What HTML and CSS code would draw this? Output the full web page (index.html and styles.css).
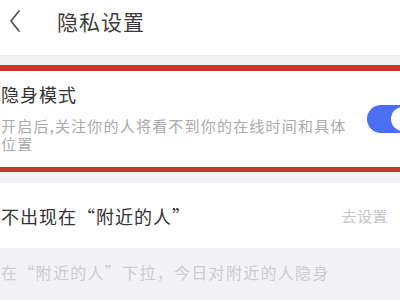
FILE: index.html
```html
<!DOCTYPE html>
<html lang="zh-CN">
<head>
<meta charset="utf-8">
<link rel="stylesheet" href="styles.css">
</head>
<body>
<div class="page">
  <header class="header">
    <svg class="back" width="14" height="24" viewBox="0 0 14 24"><path d="M11 2 L3 12 L11 22" fill="none" stroke="#555" stroke-width="1.8" stroke-linecap="round" stroke-linejoin="round"/></svg>
    <span class="title">隐私设置</span>
  </header>
  <div class="spacer"></div>
  <section class="highlight">
    <div class="row-text">
      <div class="item-title">隐身模式</div>
      <div class="item-desc">开启后,关注你的人将看不到你的在线时间和具体位置</div>
    </div>
    <div class="toggle"><span class="knob"></span></div>
  </section>
  <div class="spacer small"></div>
  <section class="row">
    <span class="item-title">不出现在“附近的人”</span>
    <span class="action">去设置</span>
  </section>
  <footer class="footer">在“附近的人”下拉，今日对附近的人隐身</footer>
</div>
</body>
</html>
```
FILE: styles.css
```css
html, body {
  margin: 0;
  padding: 0;
  background: #f2f2f5;
  overflow: hidden;
}
.page {
  width: 400px;
  height: 300px;
  overflow: hidden;
  font-family: "Noto Sans CJK SC", "Noto Sans", sans-serif;
}
.header {
  height: 55px;
  background: #fff;
  display: flex;
  align-items: flex-start;
  padding-top: 8px;
  box-sizing: border-box;
}
.back {
  margin-left: 8px;
  margin-top: 1px;
}
.title {
  margin-left: 35px;
  font-size: 21px;
  line-height: 26px;
  color: #3c3c3c;
  letter-spacing: 1px;
}
.spacer {
  height: 10px;
  background: #f1f1f1;
}
.spacer.small {
  height: 11px;
  background: #f2f2f6;
}
.highlight {
  background: #fff;
  border-top: 6px solid #c9362c;
  border-bottom: 5px solid #c9362c;
  height: 107px;
  box-sizing: border-box;
  display: flex;
  align-items: flex-start;
  padding-left: 1px;
  padding-top: 11px;
}
.row-text {
  flex: 1;
}
.item-title {
  font-size: 18px;
  line-height: 24px;
  color: #333;
  letter-spacing: 1px;
}
.item-desc {
  margin-top: 11px;
  font-size: 15px;
  line-height: 18px;
  color: #aaa;
  letter-spacing: 1.2px;
  width: 352px;
}
.toggle {
  width: 50px;
  height: 28px;
  border-radius: 14px;
  background: #4b6ef3;
  margin-right: -17px;
  margin-left: 12px;
  margin-top: 23px;
  position: relative;
  flex: none;
}
.knob {
  position: absolute;
  right: 2px;
  top: 2px;
  width: 24px;
  height: 24px;
  border-radius: 50%;
  background: #fff;
}
.row {
  background: #fff;
  height: 65px;
  display: flex;
  align-items: center;
  justify-content: space-between;
  padding-left: 1px;
  padding-right: 12px;
}
.action {
  font-size: 15px;
  color: #c6c6c6;
  letter-spacing: 0.5px;
}
.footer {
  height: 52px;
  padding-top: 14px;
  box-sizing: border-box;
  padding-left: 1px;
  font-size: 16px;
  line-height: 20px;
  color: #cbcbd0;
  letter-spacing: 1.3px;
}
```
